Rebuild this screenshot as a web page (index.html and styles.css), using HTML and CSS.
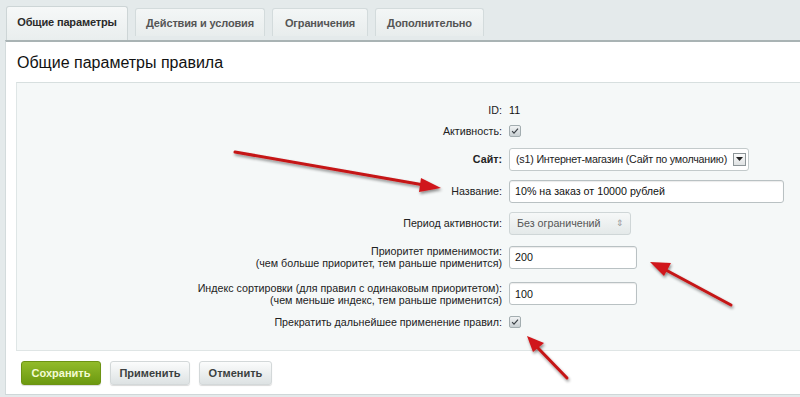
FILE: index.html
```html
<!DOCTYPE html>
<html lang="ru">
<head>
<meta charset="utf-8">
<link rel="stylesheet" href="styles.css">
</head>
<body>
<div class="page">
  <div class="tabs">
    <div class="tab active">Общие параметры</div>
    <div class="tab t2">Действия и условия</div>
    <div class="tab t3">Ограничения</div>
    <div class="tab t4">Дополнительно</div>
  </div>
  <div class="panel">
    <h1 class="title">Общие параметры правила</h1>
    <div class="form">
      <div class="row r-id"><div class="lbl">ID:</div><div class="val">11</div></div>
      <div class="row r-act"><div class="lbl">Активность:</div><div class="val"><span class="cb"><svg width="12" height="12" viewBox="0 0 12 12"><path d="M2.5 6.2 L4.8 8.6 L9.6 3.2" fill="none" stroke="#3a3f44" stroke-width="1.4"/></svg></span></div></div>
      <div class="row r-site"><div class="lbl bold">Сайт:</div><div class="val"><div class="select-site"><span class="site-text">(s1) Интернет-магазин (Сайт по умолчанию)</span><span class="dd"><svg width="7" height="4" viewBox="0 0 7 4"><path d="M0 0 H7 L3.5 4 Z" fill="#222"/></svg></span></div></div></div>
      <div class="row r-name"><div class="lbl">Название:</div><div class="val"><div class="input wide">10% на заказ от 10000 рублей</div></div></div>
      <div class="row r-per"><div class="lbl">Период активности:</div><div class="val"><div class="select-per"><span>Без ограничений</span><span class="ud">&#8661;</span></div></div></div>
      <div class="row r-pri"><div class="lbl">Приоритет применимости:<br>(чем больше приоритет, тем раньше применится)</div><div class="val"><div class="input num">200</div></div></div>
      <div class="row r-idx"><div class="lbl">Индекс сортировки (для правил с одинаковым приоритетом):<br>(чем меньше индекс, тем раньше применится)</div><div class="val"><div class="input num">100</div></div></div>
      <div class="row r-stop"><div class="lbl">Прекратить дальнейшее применение правил:</div><div class="val"><span class="cb"><svg width="12" height="12" viewBox="0 0 12 12"><path d="M2.5 6.2 L4.8 8.6 L9.6 3.2" fill="none" stroke="#3a3f44" stroke-width="1.4"/></svg></span></div></div>
    </div>
    <div class="buttons">
      <div class="btn save">Сохранить</div>
      <div class="btn">Применить</div>
      <div class="btn">Отменить</div>
    </div>
  </div>
  <svg class="arrows" width="800" height="397" viewBox="0 0 800 397">
    <defs>
      <filter id="sh" x="-20%" y="-20%" width="140%" height="140%">
        <feGaussianBlur in="SourceAlpha" stdDeviation="1.6"/>
        <feOffset dx="1" dy="2"/>
        <feComponentTransfer><feFuncA type="linear" slope="0.45"/></feComponentTransfer>
        <feMerge><feMergeNode/><feMergeNode in="SourceGraphic"/></feMerge>
      </filter>
    </defs>
    <g filter="url(#sh)" fill="#d0181a" stroke="#c51417" stroke-linecap="round">
      <line x1="235" y1="152" x2="424" y2="185" stroke-width="3"/>
      <polygon points="441,188 421,178 419,192" stroke="none"/>
      <line x1="731" y1="305" x2="664" y2="269" stroke-width="3"/>
      <polygon points="650,262 671,263 664,276" stroke="none"/>
      <line x1="567" y1="378" x2="537" y2="347" stroke-width="3"/>
      <polygon points="527,336 544,343 533,352" stroke="none"/>
    </g>
  </svg>
</div>
</body>
</html>
```
FILE: styles.css
```css
html, body {
  margin: 0;
  padding: 0;
}
body {
  background: #e4eaeb;
  font-family: "Liberation Sans", Arial, sans-serif;
  color: #000;
  width: 800px;
  height: 397px;
  overflow: hidden;
}
.page {
  position: relative;
  width: 800px;
  height: 397px;
  padding-top: 6px;
  box-sizing: border-box;
}
.tabs {
  display: flex;
  align-items: flex-end;
  height: 34px;
  padding-left: 6px;
  gap: 7px;
}
.tab {
  height: 28px;
  box-sizing: border-box;
  border: 1px solid #d3dbdc;
  border-bottom: none;
  border-radius: 3px 3px 0 0;
  background: linear-gradient(#f3f6f6, #e8eded);
  font-size: 11px;
  letter-spacing: -0.15px;
  font-weight: bold;
  color: #555;
  display: flex;
  align-items: center;
  justify-content: center;
  margin-bottom: 4px;
}
.tab.active {
  height: 34px;
  margin-bottom: 0;
  width: 122px;
  color: #2a2a2a;
  background: linear-gradient(#f6f8f8, #e9eeee);
  border-color: #cdd5d6;
  padding-bottom: 3px;
}
.t2 { width: 130px; }
.t3 { width: 96px; }
.t4 { width: 109px; }

.panel {
  margin-left: 5px;
  background: #fff;
  border-top: 2px solid #a9b3b4;
  border-left: 1px solid #d3dbdc;
  border-bottom: 1px solid #cfd7d8;
  height: 355px;
  box-sizing: border-box;
}
.title {
  margin: 0;
  font-weight: normal;
  font-size: 16px;
  line-height: 20px;
  padding: 11px 0 0 11px;
  height: 40px;
  box-sizing: border-box;
  color: #111;
}
.form {
  margin-left: 10px;
  background: #f5f8f8;
  border-top: 1px solid #d7dfdf;
  border-left: 1px solid #dfe6e6;
  border-bottom: 1px solid #dfe5e5;
  padding: 17px 0 19px;
  font-size: 10.7px;
}
.row {
  display: grid;
  grid-template-columns: 485px 1fr;
  column-gap: 7px;
  align-items: center;
}
.lbl {
  text-align: right;
  color: #222;
  line-height: 12px;
}
.lbl.bold {
  font-weight: bold;
}
.val {
  color: #111;
  display: flex;
  align-items: center;
}
.r-id { height: 20px; }
.r-act { height: 22px; }
.r-site { height: 34px; }
.r-name { height: 30px; }
.r-per { height: 34px; }
.r-pri { height: 34px; }
.r-idx { height: 39px; }
.r-stop { height: 18px; }

.cb {
  width: 12px;
  height: 12px;
  box-sizing: border-box;
  border: 1px solid #a3adb0;
  border-radius: 2px;
  background: linear-gradient(#f1f3f4, #c9d0d3);
  display: inline-flex;
  align-items: center;
  justify-content: center;
}
.cb svg { display: block; }

.select-site {
  width: 240px;
  height: 23px;
  box-sizing: border-box;
  border: 1px solid #c3cacb;
  border-radius: 3px;
  background: #fff;
  display: flex;
  align-items: center;
  justify-content: space-between;
  padding: 0 2px 0 6px;
  font-size: 10.7px;
  color: #222;
}
.site-text {
  white-space: nowrap;
  letter-spacing: -0.2px;
}
.dd {
  flex: none;
  width: 13px;
  height: 13px;
  box-sizing: border-box;
  border: 1px solid #8d9598;
  background: linear-gradient(#fbfbfb, #dfe2e3);
  display: flex;
  align-items: center;
  justify-content: center;
}
.dd svg { display: block; }

.input {
  height: 23px;
  box-sizing: border-box;
  border: 1px solid #b9c1c3;
  border-radius: 3px;
  background: #fff;
  box-shadow: inset 0 1px 1px rgba(0,0,0,0.08);
  display: flex;
  align-items: center;
  padding-left: 5px;
  font-size: 10.7px;
  color: #111;
}
.input.wide { width: 275px; }
.input.num { width: 128px; }

.select-per {
  width: 122px;
  height: 23px;
  box-sizing: border-box;
  border: 1px solid #cfd6d7;
  border-radius: 3px;
  background: linear-gradient(#f6f8f8, #e4e9e9);
  display: flex;
  align-items: center;
  justify-content: space-between;
  padding: 0 6px 0 7px;
  font-size: 10.7px;
  color: #555;
}
.ud {
  font-size: 9px;
  color: #999;
}

.buttons {
  display: flex;
  gap: 9px;
  padding: 10px 0 0 15px;
}
.btn {
  width: 80px;
  height: 24px;
  box-sizing: border-box;
  border-radius: 3px;
  border: 1px solid #d3d8d9;
  background: linear-gradient(#fbfcfc, #dde2e3);
  box-shadow: 0 1px 1px rgba(0,0,0,0.15);
  font-size: 11px;
  font-weight: bold;
  color: #3b3f40;
  display: flex;
  align-items: center;
  justify-content: center;
}
.btn:last-child { width: 73px; }
.btn.save {
  background: linear-gradient(#92bb2a, #6c9910);
  border-color: #6d9313;
  color: #f4fbd4;
}

.arrows {
  position: absolute;
  left: 0;
  top: 0;
  pointer-events: none;
}
```
